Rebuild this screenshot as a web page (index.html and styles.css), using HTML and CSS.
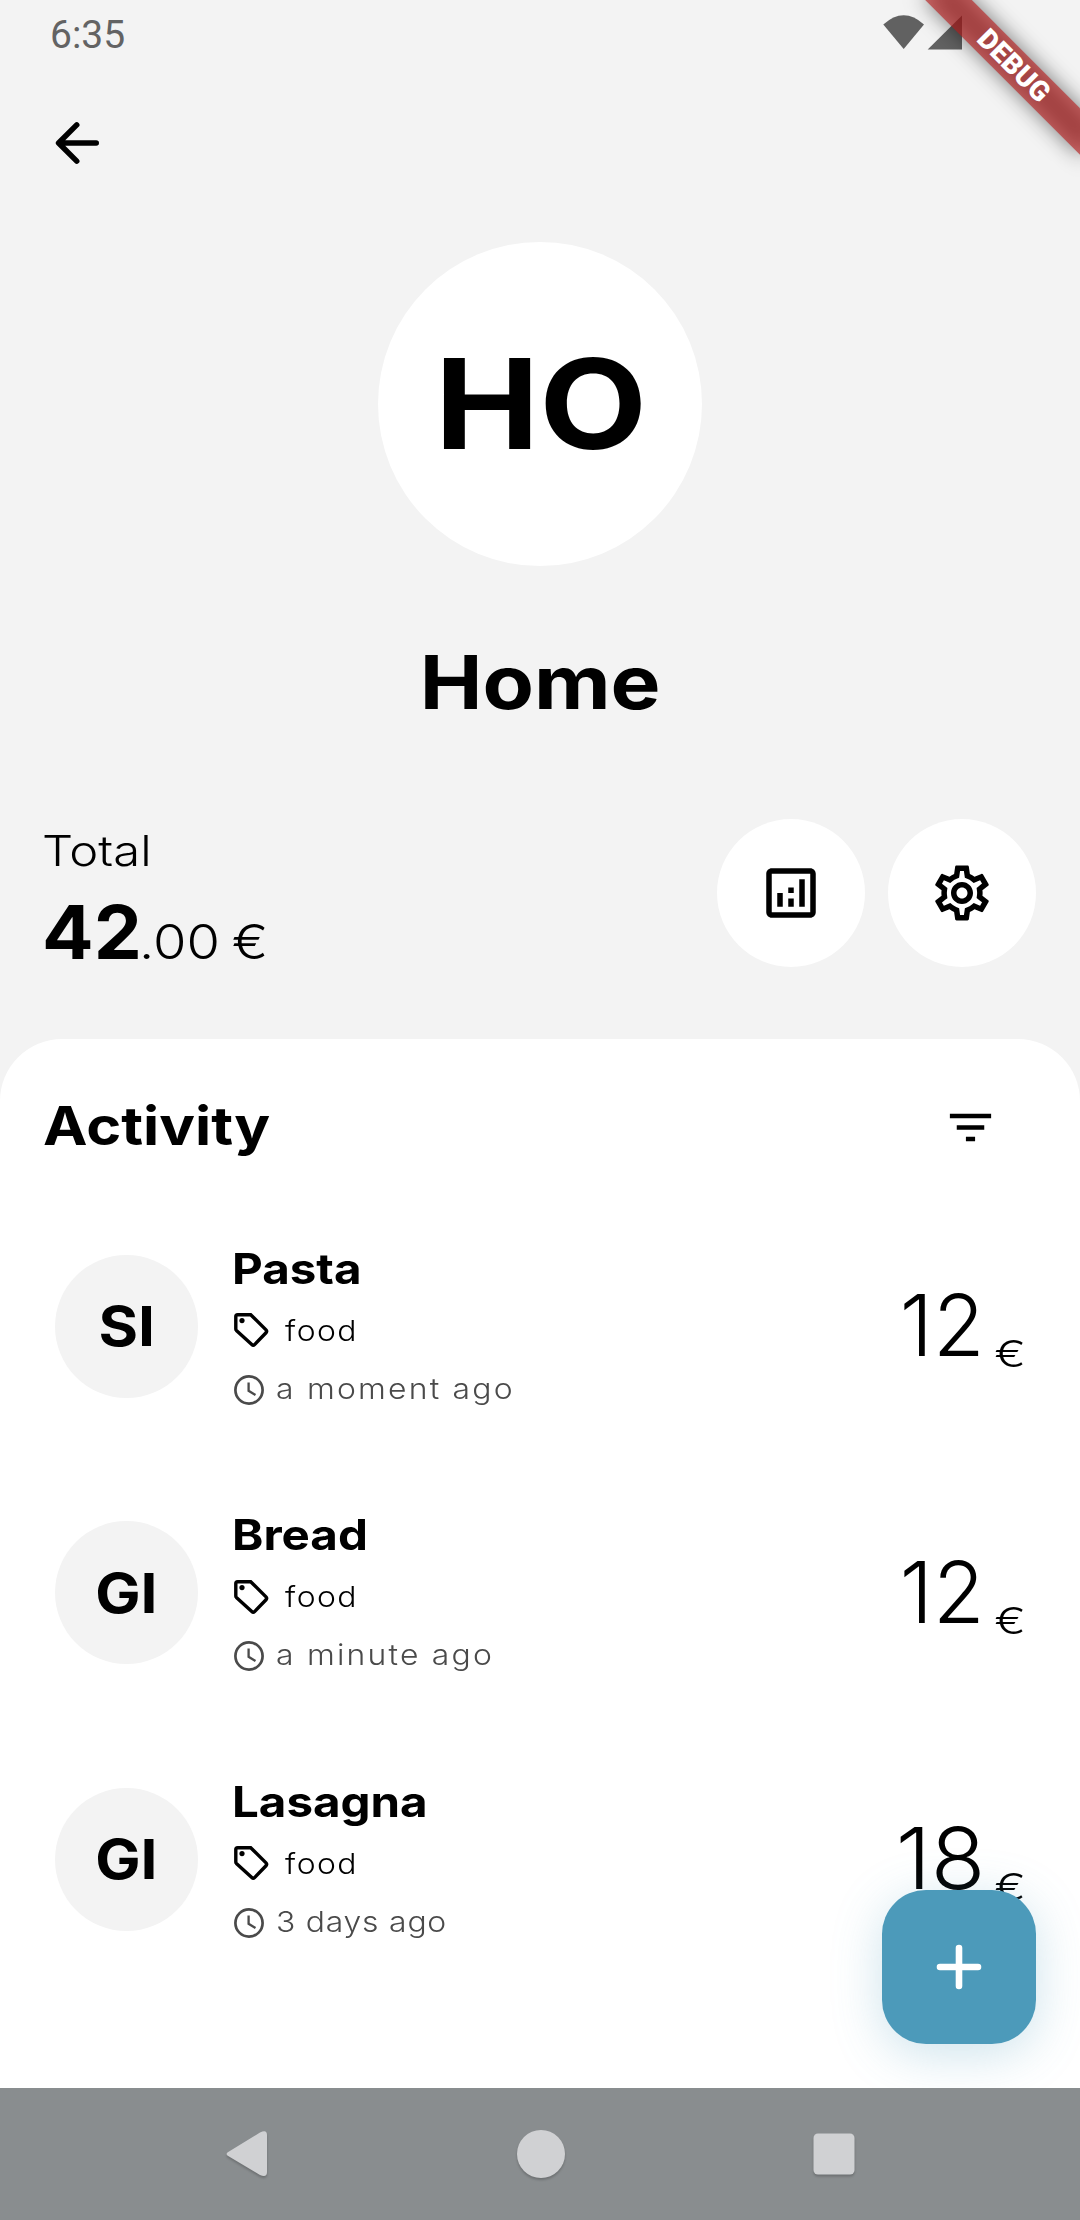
FILE: index.html
```html
<!DOCTYPE html>
<html lang="en">
<head>
<meta charset="utf-8">
<title>Home</title>
<link rel="stylesheet" href="styles.css">
</head>
<body>
<svg class="sprite" aria-hidden="true">
  <symbol id="tag" viewBox="0 0 35 35">
    <path d="M1.8 3.6Q1.8 1.7 3.7 1.7H16.7L32 16.9Q33.3 18.3 32 19.8L20.6 31.6Q19.2 32.9 17.8 31.6L2.4 17.4Q1.8 16.8 1.8 16Z" fill="none" stroke="#000" stroke-width="3.4"/>
    <circle cx="8" cy="7.6" r="2.6"/>
  </symbol>
  <symbol id="clock" viewBox="0 0 30 30">
    <circle cx="15" cy="15" r="13.6" fill="none" stroke="#4a4a4a" stroke-width="2.7"/>
    <path d="M14.6 7.5V15.8L21.5 20" fill="none" stroke="#4a4a4a" stroke-width="2.3"/>
  </symbol>
</svg>

<div class="screen">
  <header class="status-bar">
    <span class="status-time">6:35</span>
    <svg class="status-icons" width="80" height="36" viewBox="0 0 80 36">
      <path d="M0.3 9.5Q20.7 -9 41 9.5L20.7 34Z"/>
      <path d="M44.7 34.5 79 .5V34.5Z"/>
    </svg>
  </header>

  <nav class="app-bar">
    <svg width="66" height="66" viewBox="0 0 24 24"><path d="M19 12H5.4M11.9 5.4 5.3 12 11.9 18.6" fill="none" stroke="#000" stroke-width="2" stroke-linecap="round" stroke-linejoin="round"/></svg>
  </nav>

  <section class="hero">
    <div class="hero-avatar"><span class="hero-initials">HO</span></div>
    <h1 class="hero-name">Home</h1>
  </section>

  <section class="summary">
    <div class="total">
      <div class="total-label">Total</div>
      <div class="total-amount"><span class="total-whole">42</span><span class="total-rest">.00 €</span></div>
    </div>
    <div class="actions">
      <div class="round-button">
        <svg width="66" height="66" viewBox="0 0 24 24"><path d="M19 3H5c-1.1 0-2 .9-2 2v14c0 1.1.9 2 2 2h14c1.1 0 2-.9 2-2V5c0-1.1-.9-2-2-2zm0 16H5V5h14v14zM7 12h2v5H7zM15 7h2v10h-2zM11 14h2v3h-2zM11 10h2v2h-2z"/></svg>
      </div>
      <div class="round-button">
        <svg width="66" height="66" viewBox="0 0 24 24"><path d="M19.43 12.98c.04-.32.07-.64.07-.98s-.03-.66-.07-.98l2.11-1.65c.19-.15.24-.42.12-.64l-2-3.46c-.09-.16-.26-.25-.44-.25-.06 0-.12.01-.17.03l-2.49 1c-.52-.4-1.08-.73-1.69-.98l-.38-2.65C14.46 2.18 14.25 2 14 2h-4c-.25 0-.46.18-.49.42l-.38 2.65c-.61.25-1.17.59-1.69.98l-2.49-1c-.06-.02-.12-.03-.18-.03-.17 0-.34.09-.43.25l-2 3.46c-.13.22-.07.49.12.64l2.11 1.65c-.04.32-.07.65-.07.98s.03.66.07.98l-2.11 1.65c-.19.15-.24.42-.12.64l2 3.46c.09.16.26.25.44.25.06 0 .12-.01.17-.03l2.49-1c.52.4 1.08.73 1.69.98l.38 2.65c.03.24.24.42.49.42h4c.25 0 .46-.18.49-.42l.38-2.65c.61-.25 1.17-.59 1.69-.98l2.49 1c.06.02.12.03.18.03.17 0 .34-.09.43-.25l2-3.46c.12-.22.07-.49-.12-.64zm-1.98-1.71c.04.31.05.52.05.73s-.02.43-.05.73l-.14 1.13.89.7 1.08.84-.7 1.21-1.27-.51-1.04-.42-.9.68c-.43.32-.84.56-1.25.73l-1.06.43-.16 1.13-.2 1.35h-1.4l-.19-1.35-.16-1.13-1.06-.43c-.43-.18-.83-.41-1.23-.71l-.91-.7-1.06.43-1.27.51-.7-1.21 1.08-.84.89-.7-.14-1.13c-.03-.31-.05-.54-.05-.74s.02-.43.05-.73l.14-1.13-.89-.7-1.08-.84.7-1.21 1.27.51 1.04.42.9-.68c.43-.32.84-.56 1.25-.73l1.06-.43.16-1.13.2-1.35h1.39l.19 1.35.16 1.13 1.06.43c.43.18.83.41 1.23.71l.91.7 1.06-.43 1.27-.51.7 1.21-1.07.85-.89.7zM12 8c-2.21 0-4 1.79-4 4s1.79 4 4 4 4-1.79 4-4-1.79-4-4-4zm0 6c-1.1 0-2-.9-2-2s.9-2 2-2 2 .9 2 2-.9 2-2 2z"/></svg>
      </div>
    </div>
  </section>

  <main class="sheet">
    <div class="sheet-header">
      <h2 class="sheet-title">Activity</h2>
      <svg class="filter" width="55" height="55" viewBox="0 0 24 24"><path d="M10 18h4v-2h-4zM3 6v2h18V6zM6 13h12v-2H6z"/></svg>
    </div>

    <article class="entry">
      <div class="avatar"><span class="initials">SI</span></div>
      <div class="info">
        <h3 class="title">Pasta</h3>
        <div class="tag-line"><svg width="35" height="35"><use href="#tag"/></svg><span class="tag-text">food</span></div>
        <div class="time-line"><svg width="30" height="30"><use href="#clock"/></svg><span class="time-text">a moment ago</span></div>
      </div>
      <div class="price"><span class="number">12</span><span class="currency">€</span></div>
    </article>

    <article class="entry">
      <div class="avatar"><span class="initials">GI</span></div>
      <div class="info">
        <h3 class="title">Bread</h3>
        <div class="tag-line"><svg width="35" height="35"><use href="#tag"/></svg><span class="tag-text">food</span></div>
        <div class="time-line"><svg width="30" height="30"><use href="#clock"/></svg><span class="time-text">a minute ago</span></div>
      </div>
      <div class="price"><span class="number">12</span><span class="currency">€</span></div>
    </article>

    <article class="entry">
      <div class="avatar"><span class="initials">GI</span></div>
      <div class="info">
        <h3 class="title">Lasagna</h3>
        <div class="tag-line"><svg width="35" height="35"><use href="#tag"/></svg><span class="tag-text">food</span></div>
        <div class="time-line"><svg width="30" height="30"><use href="#clock"/></svg><span class="time-text time-text-tight">3 days ago</span></div>
      </div>
      <div class="price"><span class="number number-wide">18</span><span class="currency">€</span></div>
    </article>

    <div class="fab">
      <svg width="66" height="66" viewBox="0 0 66 66"><path d="M33 14V52M14 33H52" fill="none" stroke="#fff" stroke-width="6.6" stroke-linecap="round"/></svg>
    </div>
  </main>

  <footer class="nav-bar">
    <svg class="nav-icon" width="42" height="50" viewBox="0 0 42 50"><path d="M3 22.5 34 3.5Q41 0 41 6V43Q41 49 34 46L3 27.5Q-2 25 3 22.5Z"/></svg>
    <svg class="nav-icon" width="48" height="50" viewBox="0 0 48 50"><circle cx="24" cy="25" r="24"/></svg>
    <svg class="nav-icon" width="42" height="50" viewBox="0 0 42 50"><rect x=".5" y="4.5" width="41" height="41" rx="4.5"/></svg>
  </footer>

  <div class="banner"><span class="banner-text">DEBUG</span></div>
</div>
</body>
</html>
```
FILE: styles.css
```css
* { box-sizing: border-box; margin: 0; }

body {
  font-family: "Inter", sans-serif;
  color: #000;
  background: #f3f3f3;
}

.sprite { display: none; }

svg { display: block; flex: none; }

.screen {
  position: relative;
  display: flex;
  flex-direction: column;
  width: 1080px;
  height: 2220px;
  overflow: hidden;
  background: #f3f3f3;
}

.status-bar {
  display: flex;
  justify-content: space-between;
  align-items: center;
  height: 66px;
  padding: 2px 117px 0 50px;
  font-family: "Roboto", sans-serif;
  font-size: 39px;
  line-height: 64px;
  color: #636363;
}

.status-time { margin-top: 2px; }

.status-icons {
  margin-bottom: 3px;
  fill: #616161;
}

.app-bar {
  display: flex;
  align-items: center;
  height: 154px;
  padding-left: 44px;
}

.hero {
  display: flex;
  flex-direction: column;
  align-items: center;
  padding-top: 22px;
}

.hero-avatar {
  display: flex;
  align-items: center;
  justify-content: center;
  width: 324px;
  height: 324px;
  border-radius: 50%;
  background: #fff;
}

.hero-initials {
  padding-left: 2px;
  font-size: 125px;
  font-weight: 700;
  line-height: 130px;
  transform: scaleX(1.12);
}

.hero-name {
  margin-top: 66px;
  font-size: 74px;
  font-weight: 700;
  line-height: 100px;
  transform: scaleX(1.135);
}

.summary {
  display: flex;
  justify-content: space-between;
  height: 148px;
  margin-top: 87px;
  padding: 0 44px 0 42px;
}

.total {
  display: flex;
  flex-direction: column;
  align-items: flex-start;
  gap: 14px;
  padding-top: 5px;
}

.total-label {
  font-size: 42.4px;
  font-weight: 300;
  line-height: 54px;
  transform: scaleX(1.155);
  transform-origin: left;
}

.total-amount {
  display: flex;
  align-items: baseline;
  line-height: 80px;
  white-space: nowrap;
}

.total-whole {
  font-size: 74px;
  font-weight: 700;
  transform: scaleX(1.033);
  transform-origin: left;
}

.total-rest {
  font-size: 48px;
  font-weight: 300;
  word-spacing: -3px;
  transform: scaleX(1.13);
  transform-origin: left;
}

.actions {
  display: flex;
  gap: 23px;
}

.round-button {
  display: flex;
  align-items: center;
  justify-content: center;
  width: 148px;
  height: 148px;
  border-radius: 50%;
  background: #fff;
}

.sheet {
  position: relative;
  flex: 1;
  margin-top: 72px;
  padding-top: 60px;
  border-radius: 62px 62px 0 0;
  background: #fff;
}

.sheet-header {
  display: flex;
  align-items: center;
  justify-content: space-between;
  height: 54px;
  margin-bottom: 40px;
  padding: 0 82px 0 43px;
}

.sheet-title {
  font-size: 53px;
  font-weight: 700;
  line-height: 54px;
  transform: scaleX(1.125);
  transform-origin: left;
}

.filter { margin-top: 3px; }

.entry {
  display: flex;
  align-items: center;
  height: 266.5px;
  padding: 0 54px 0 55px;
}

.avatar {
  display: flex;
  align-items: center;
  justify-content: center;
  width: 143px;
  height: 143px;
  margin-right: 36px;
  border-radius: 50%;
  background: #f3f3f3;
}

.initials {
  font-size: 55px;
  font-weight: 700;
  line-height: 60px;
  transform: scaleX(1.1);
}

.info {
  display: flex;
  flex: 1;
  flex-direction: column;
  align-items: flex-start;
  margin-top: 4px;
}

.title {
  margin-left: -2px;
  font-size: 42.4px;
  font-weight: 700;
  line-height: 51px;
  transform: scaleX(1.12);
  transform-origin: left;
}

.tag-line {
  display: flex;
  align-items: center;
  gap: 16px;
  height: 72px;
  padding-top: 2px;
}

.tag-text {
  font-size: 29px;
  font-weight: 300;
  letter-spacing: 1.3px;
  line-height: 34px;
  transform: scaleX(1.1);
  transform-origin: left;
}

.time-line {
  display: flex;
  align-items: center;
  gap: 12px;
  height: 48px;
}

.time-text {
  margin-top: -2px;
  font-size: 29px;
  font-weight: 300;
  letter-spacing: 2px;
  line-height: 34px;
  color: #4a4a4a;
  transform: scaleX(1.1);
  transform-origin: left;
}

.time-text-tight { letter-spacing: .7px; }

.price {
  display: flex;
  align-items: center;
  gap: 16px;
}

.number {
  font-size: 85px;
  font-weight: 330;
  line-height: 90px;
  transform: scaleX(.99);
  transform-origin: right;
}

.number-wide { transform: scaleX(1.05); }

.currency {
  padding-top: 56px;
  font-size: 37px;
  font-weight: 300;
  line-height: 40px;
  transform: scaleX(1.27);
  transform-origin: right;
}

.fab {
  position: absolute;
  right: 44px;
  bottom: 44px;
  display: flex;
  align-items: center;
  justify-content: center;
  width: 154px;
  height: 154px;
  border-radius: 44px;
  background: #4c9aba;
  box-shadow: 0 10px 50px rgba(76, 154, 186, .28);
}

.nav-bar {
  position: relative;
  display: flex;
  align-items: center;
  justify-content: space-between;
  height: 132px;
  padding: 0 225px 0 226px;
  background: #898d8f;
}

.nav-icon {
  fill: #d0d1d3;
  overflow: visible;
  filter: drop-shadow(0 2px 1px rgba(0, 0, 0, .2));
}

.banner {
  position: absolute;
  top: 49px;
  left: 904px;
  display: flex;
  align-items: center;
  justify-content: center;
  width: 220px;
  height: 33px;
  transform: rotate(45deg);
}

.banner::before,
.banner::after {
  content: "";
  position: absolute;
  inset: 0;
}

.banner::before {
  background: rgba(0, 0, 0, .5);
  filter: blur(10.9px);
}

.banner::after { background: rgba(183, 28, 28, .627); }

.banner-text {
  position: relative;
  z-index: 1;
  font-family: "Roboto", sans-serif;
  font-size: 28px;
  font-weight: 900;
  line-height: 33px;
  color: #fff;
}
```
